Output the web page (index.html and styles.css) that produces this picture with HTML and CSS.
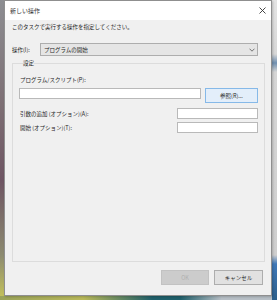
FILE: index.html
```html
<!DOCTYPE html>
<html lang="ja">
<head>
    <meta charset="UTF-8">
    <title>新しい操作</title>
    <link rel="stylesheet" href="styles.css">
</head>
<body>
    <div class="window">
        <div class="titlebar">
            <span class="title">新しい操作</span>
            <svg class="close" width="7" height="7" viewBox="0 0 7 7">
                <path d="M0.5 0.5 L6.5 6.5 M6.5 0.5 L0.5 6.5" stroke="#333" stroke-width="0.9" fill="none"/>
            </svg>
        </div>

        <div class="content">
            <div class="desc">このタスクで実行する操作を指定してください。</div>

            <div class="action-row">
                <span class="action-label">操作(I):</span>
                <div class="select">
                    <span>プログラムの開始</span>
                    <svg width="6" height="4" viewBox="0 0 6 4">
                        <polyline points="0.5,0.7 3,3.2 5.5,0.7" stroke="#555" stroke-width="0.8" fill="none"/>
                    </svg>
                </div>
            </div>

            <fieldset class="settings">
                <legend>設定</legend>
                <div class="field-label">プログラム/スクリプト(P):</div>
                <div class="program-row">
                    <div class="textbox wide"></div>
                    <div class="btn browse">参照(R)...</div>
                </div>
                <div class="option-row first">
                    <span>引数の追加 (オプション)(A):</span>
                    <div class="textbox short"></div>
                </div>
                <div class="option-row">
                    <span>開始 (オプション)(T):</span>
                    <div class="textbox short"></div>
                </div>
            </fieldset>

            <div class="footer">
                <div class="btn ok">OK</div>
                <div class="btn cancel">キャンセル</div>
            </div>
        </div>
    </div>
</body>
</html>
```

FILE: styles.css
```css
body {
    margin: 0;
    width: 277px;
    height: 300px;
    overflow: hidden;
    font-family: "Noto Sans CJK JP", "Noto Sans", sans-serif;
    font-size: 5.5px;
    color: #1e1e1e;
    background:
        linear-gradient(180deg, #e4e4e4 0%, #d8d8d8 18%, #6f8fb0 21%, #d6d6d6 24%, #cfcfcf 85%, #3f78b8 88%, #2d5f8a 100%) right top / 5px 100% no-repeat,
        linear-gradient(90deg, #9aa35a 0%, #b9b95a 30%, #1f5f6a 55%, #1f5f6a 65%, #b7bfc6 80%) left bottom / 100% 4px no-repeat,
        linear-gradient(180deg, #8d8e92 0%, #7d6f74 35%, #6e5563 60%, #8c8a70 85%, #c6c45a 100%);
}
.window {
    margin-left: 4px;
    width: 268px;
    height: 296px;
    box-sizing: border-box;
    border: 1px solid #8f8f8f;
    background-color: #f0f0f0;
    display: flex;
    flex-direction: column;
    box-shadow: 1px 1px 2px rgba(0,0,0,0.2);
}
.titlebar {
    height: 19px;
    background-color: #ffffff;
    display: flex;
    align-items: center;
    justify-content: space-between;
    padding: 0 5px 0 5px;
    flex-shrink: 0;
}
.title {
    font-size: 6px;
    color: #333;
}
.content {
    flex: 1;
    display: flex;
    flex-direction: column;
    padding: 3px 0 10px 0;
}
.desc {
    line-height: 8px;
    padding-left: 7px;
}
.action-row {
    display: flex;
    align-items: center;
    margin: 12px 13px 0 7px;
}
.action-label {
    width: 28px;
}
.select {
    flex: 1;
    height: 13px;
    box-sizing: border-box;
    border: 1px solid #adadad;
    background-color: #e5e5e5;
    display: flex;
    align-items: center;
    justify-content: space-between;
    padding: 0 2px 0 3px;
}
.settings {
    flex: 1;
    min-height: 0;
    margin: 3px 7px 8px 7px;
    padding: 9px 6px 0 7px;
    border: 1px solid #dcdcdc;
    border-radius: 0;
}
.settings legend {
    padding: 0;
    margin-left: 3px;
    line-height: 8px;
}
.field-label {
    line-height: 8px;
}
.program-row {
    display: flex;
    align-items: flex-start;
    margin-top: 4px;
    margin-left: -1px;
}
.textbox {
    height: 11px;
    box-sizing: border-box;
    border: 1px solid #b9b9b9;
    background-color: #ffffff;
}
.wide {
    width: 182px;
}
.short {
    width: 81px;
}
.btn {
    box-sizing: border-box;
    display: flex;
    align-items: center;
    justify-content: center;
}
.browse {
    margin-left: 4px;
    width: 53px;
    height: 15px;
    border: 1px solid #86b9e8;
    background-color: #e3eefa;
}
.option-row {
    display: flex;
    align-items: center;
    justify-content: space-between;
    margin-top: 3px;
}
.option-row.first {
    margin-top: 5px;
}
.footer {
    display: flex;
    justify-content: flex-end;
    gap: 5px;
    padding-right: 8px;
}
.footer .btn {
    height: 15px;
}
.ok {
    width: 48px;
    border: 1px solid #c2c2c2;
    background-color: #cccccc;
    color: #b0b0b0;
}
.cancel {
    width: 49px;
    border: 1px solid #adadad;
    background-color: #e1e1e1;
}
```
